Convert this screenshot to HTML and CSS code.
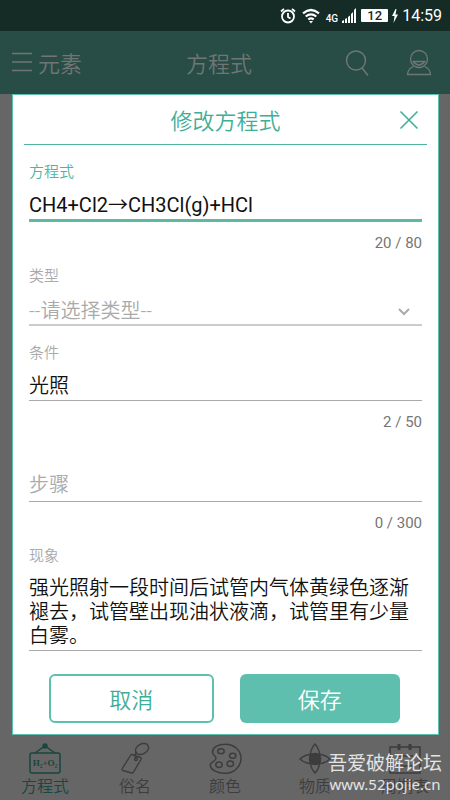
FILE: index.html
```html
<!DOCTYPE html>
<html lang="zh-CN">
<head>
<meta charset="utf-8">
<meta name="viewport" content="width=device-width, initial-scale=1">
<title>修改方程式</title>
<link rel="stylesheet" href="styles.css">
</head>
<body>
<div class="status">
  <svg width="16" height="18" viewBox="0 0 16 18" fill="none" stroke="#fff" stroke-width="1.8"><circle cx="8" cy="9.5" r="6"/><path d="M8 6v4l2.500 1.500M1 4.500l3-2.700M15 4.500l-3-2.700"/></svg>
  <svg class="wifi" width="18" height="16" viewBox="0 0 18 16" fill="none" stroke="#fff" stroke-width="2.200"><path d="M1 5.300q8-6.600 16 0M3.700 8.500q5.300-4.400 10.600 0M6.300 11.500q2.700-2.300 5.400 0"/><path d="M7 13h4l-2 2.500z" fill="#fff" stroke="none"/></svg>
  <span class="net">4G</span>
  <svg class="signal" width="15" height="15" viewBox="0 0 15 15" fill="#fff"><path d="M0 15v-2l2-1v3zM3 15v-4l2-1v5zM6 15V9l2-1.500V15zM9 15V6l2-2v11zM12 15V2l2-2v15z"/></svg>
  <span class="battery">12</span>
  <svg class="bolt" width="6" height="14" viewBox="0 0 6 14" fill="#fff"><path d="M3.500 0L0 7h2.500L1.500 14 6 5.500H3.500L4.500 0z"/></svg>
  <span class="clock">14:59</span>
</div>
<header class="appbar">
  <button class="menu" type="button">
    <svg width="20" height="20" viewBox="0 0 20 20" fill="none" stroke="currentColor" stroke-width="1.500"><path d="M0 1.500h20M0 10h20M0 18.500h20"/></svg>
    <span>元素</span>
  </button>
  <h1>方程式</h1>
  <div class="actions">
    <button type="button" aria-label="搜索"><svg width="26" height="28" viewBox="0 0 26 28" fill="none" stroke="currentColor" stroke-width="1.500"><circle cx="12" cy="11.500" r="9.500"/><path d="M18 19l6 7.500"/></svg></button>
    <button type="button" aria-label="我的"><svg width="26" height="28" viewBox="0 0 26 28" fill="none" stroke="currentColor" stroke-width="1.300"><circle cx="13" cy="10" r="8.500"/><path d="M6.500 12.500h13M7 12.500q6 7 12 0M7.500 17.500Q2 19.500 1.500 25.500h23Q24 19.500 18.500 17.500"/></svg></button>
  </div>
</header>
<main class="stage">
  <form class="dialog" role="dialog" aria-labelledby="dialog-title">
    <div class="dialog-head">
      <h2 id="dialog-title">修改方程式</h2>
      <button class="close" type="button" aria-label="关闭"><svg width="20" height="20" viewBox="0 0 20 20" fill="none" stroke="currentColor" stroke-width="1.600"><path d="M1.500 1.500l17 17M18.500 1.500l-17 17"/></svg></button>
    </div>
    <div class="fields">
      <div class="field active">
        <label for="equation">方程式</label>
        <input class="control" id="equation" type="text" value="CH4+Cl2→CH3Cl(g)+HCl">
        <span class="count">20 / 80</span>
      </div>
      <div class="field">
        <label for="kind">类型</label>
        <div class="stack">
          <select class="control" id="kind"><option>--请选择类型--</option></select>
          <svg class="chevron" width="14" height="10" viewBox="0 0 14 10" fill="none" stroke="currentColor" stroke-width="2"><path d="M2 2l5 5 5-5"/></svg>
        </div>
      </div>
      <div class="field">
        <label for="condition">条件</label>
        <input class="control" id="condition" type="text" value="光照">
        <span class="count">2 / 50</span>
      </div>
      <div class="field floating">
        <div class="stack">
          <input class="control" id="step" type="text">
          <label for="step">步骤</label>
        </div>
        <span class="count">0 / 300</span>
      </div>
      <div class="field">
        <label for="phenomenon">现象</label>
        <textarea class="control" id="phenomenon" rows="3">强光照射一段时间后试管内气体黄绿色逐渐褪去，试管壁出现油状液滴，试管里有少量白雾。</textarea>
      </div>
    </div>
    <div class="buttons">
      <button class="btn outline" type="button">取消</button>
      <button class="btn solid" type="submit">保存</button>
    </div>
  </form>
</main>
<nav class="tabs">
  <a class="tab current" href="#equations">
    <svg width="34" height="34" viewBox="0 0 34 34" fill="none" stroke="currentColor" stroke-width="1.500"><rect x="2" y="12" width="30" height="20" rx="2"/><path d="M7 12L17 5l10 7"/><circle cx="17" cy="5" r="2.700" fill="currentColor" stroke="none"/><text x="17" y="25" class="formula">H₂+O₂</text></svg>
    <span>方程式</span>
  </a>
  <a class="tab" href="#names">
    <svg width="34" height="34" viewBox="0 0 34 34" fill="none" stroke="currentColor" stroke-width="1.400"><path d="M14 13.500l8.500 3q1 .5.500 2L15.500 31q-.8 1.500-2 1L5 29.500q-1.500-.5-.7-2L12.500 14.500q.5-1.300 1.500-1z"/><ellipse cx="24" cy="8" rx="7" ry="5" transform="rotate(-28 24 8)"/><path d="M18 17.500q-1.500-4 .5-7"/><circle cx="18" cy="18" r="1.500"/></svg>
    <span>俗名</span>
  </a>
  <a class="tab" href="#colors">
    <svg width="34" height="34" viewBox="0 0 34 34" fill="none" stroke="currentColor" stroke-width="1.500"><path d="M17 3.300C26 3 33 9.500 33 17.500S26 32.500 17 32.300C10 32.500 3 29 2.200 24.500 1.500 21 7.500 20.500 8 17.500 8.300 15 4.500 14.500 4.500 11 4.500 6.500 10 3.300 17 3.300z"/><ellipse cx="13" cy="10.300" rx="3.200" ry="2.500"/><ellipse cx="24.700" cy="14.700" rx="3.200" ry="2.500"/><ellipse cx="22.300" cy="22.700" rx="3.200" ry="2.700"/><ellipse cx="11" cy="23.700" rx="3.200" ry="2.700"/></svg>
    <span>颜色</span>
  </a>
  <a class="tab" href="#substances">
    <svg width="34" height="34" viewBox="0 0 34 34" fill="none" stroke="currentColor" stroke-width="1.500"><path d="M17 3c4 4 5 9 5 15s-1 10-5 14c-4-4-5-8-5-14s1-11 5-15z"/><path d="M2 18c4-4 9-5 15-5s11 1 15 5c-4 4-9 5-15 5s-11-1-15-5z"/><circle cx="17" cy="18" r="5.500" fill="currentColor"/></svg>
    <span>物质</span>
  </a>
  <a class="tab" href="#table">
    <svg width="34" height="34" viewBox="0 0 34 34" fill="none" stroke="currentColor" stroke-width="1.500"><rect x="2" y="6" width="30" height="26"/><path d="M11 3v6M22 3v6" stroke-width="3"/><path d="M9 15h16M9 25h16"/></svg>
    <span>周期表</span>
  </a>
  <div class="watermark"><span class="site">吾爱破解论坛</span><span class="url">www.52pojie.cn</span></div>
</nav>
</body>
</html>
```
FILE: styles.css
```css
* { box-sizing: border-box; }
body {
  margin: 0;
  min-height: 100vh;
  display: flex;
  flex-direction: column;
  background: #666;
  font-family: Roboto, "Noto Sans CJK SC", sans-serif;
  font-weight: 350;
  line-height: 1.2;
}
button { border: 0; padding: 0; background: none; color: inherit; font: inherit; }
svg { display: block; flex: none; }
h1, h2 { margin: 0; font-size: 22px; font-weight: 350; }
h1, h2, .menu, .btn { font-family: "Noto Sans CJK SC", sans-serif; }

.status {
  height: 31px;
  padding-right: 8px;
  display: flex;
  align-items: center;
  justify-content: flex-end;
  background: #152b26;
  color: #fff;
  font-weight: 400;
}
.wifi { margin-left: 6px; }
.net { margin: 6px 4px 0 6px; font-size: 10px; line-height: 12px; font-weight: 500; }
.battery {
  margin-left: 4px;
  width: 27px;
  border-radius: 1px;
  background: #fff;
  color: #152b26;
  font-size: 13px;
  line-height: 13px;
  font-weight: 500;
  text-align: center;
}
.bolt { margin: 0 4px; }
.clock { font-size: 16px; }

.appbar {
  height: 63px;
  padding: 0 18px 0 12px;
  display: grid;
  grid-template-columns: 1fr auto 1fr;
  align-items: center;
  background: #274d46;
  color: #707674;
}
.appbar h1 { padding-right: 6px; }
.menu { display: flex; align-items: center; gap: 6px; font-size: 22px; }
.actions { display: flex; justify-content: flex-end; gap: 36px; }

.stage { flex: 1; display: flex; padding: 0 11px 0 12px; }
.dialog {
  flex: 1;
  display: flex;
  flex-direction: column;
  border: 1px solid #5dbfad;
  background: #fff;
}
.dialog-head {
  height: 50px;
  margin: 0 11px;
  padding: 0 8px;
  display: grid;
  grid-template-columns: 1fr auto 1fr;
  align-items: center;
  border-bottom: 1px solid #4fb3a0;
  color: #3fae99;
}
.dialog-head h2 { grid-column: 2; }
.close { justify-self: end; }

.fields { padding: 17px 16px 0; }
.field { display: flex; flex-direction: column; margin-bottom: 13px; color: #aaa; }
.field label { font-size: 15px; line-height: 20px; }
.field.active label { color: #4fb3a0; }
.control {
  width: 100%;
  height: 30px;
  margin: 8px 0 0;
  padding: 0 0 2px;
  border: 0;
  border-bottom: 1px solid #aaa;
  border-radius: 0;
  outline: 0;
  background: none;
  color: #111;
  font: inherit;
  font-size: 20px;
}
.active .control { height: 32px; border-bottom: 3px solid #5fb8a4; font-weight: 400; }
.stack { display: grid; align-items: center; }
.stack > * { grid-area: 1 / 1; }
select.control {
  height: 32px;
  padding: 4px 0 0;
  appearance: none;
  border-bottom: 2px solid #ccc;
  color: #aaa;
}
.stack:has(select) { margin-bottom: 4px; }
.chevron { justify-self: end; margin: 12px 11px 0 0; pointer-events: none; }
.floating { padding-top: 19px; }
.floating .stack label { margin-top: 4px; font-size: 20px; pointer-events: none; }
textarea.control {
  display: block;
  height: auto;
  margin-top: 10px;
  line-height: 24px;
  resize: none;
  overflow: hidden;
}
.count { margin-top: 11px; text-align: right; font-size: 15px; line-height: 20px; font-weight: 400; color: #757575; }

.buttons {
  display: flex;
  gap: 26px;
  margin-top: 10px;
  padding: 0 38px 0 36px;
}
.btn { flex: 1; height: 49px; border-radius: 6px; font-size: 22px; }
.outline { border: 2px solid #5dbfad; color: #3fae99; }
.solid { background: #5fbfae; color: #fff; }

.tabs {
  position: relative;
  height: 65px;
  padding-top: 6px;
  display: flex;
  color: #3d3d3d;
}
.tab {
  flex: 1;
  display: flex;
  flex-direction: column;
  align-items: center;
  color: inherit;
  text-decoration: none;
  font-size: 16px;
  line-height: 24px;
}
.current { color: #17473e; }
.formula { font: bold 9px "Liberation Serif", serif; text-anchor: middle; fill: currentColor; stroke: none; }
.watermark {
  position: absolute;
  right: 8px;
  bottom: 7px;
  display: flex;
  flex-direction: column;
  align-items: center;
  color: #e4e4e4;
  pointer-events: none;
}
.site { font-size: 19px; line-height: 22px; font-weight: 400; }
.url { font: 15px/18px "Noto Sans", sans-serif; }
```
